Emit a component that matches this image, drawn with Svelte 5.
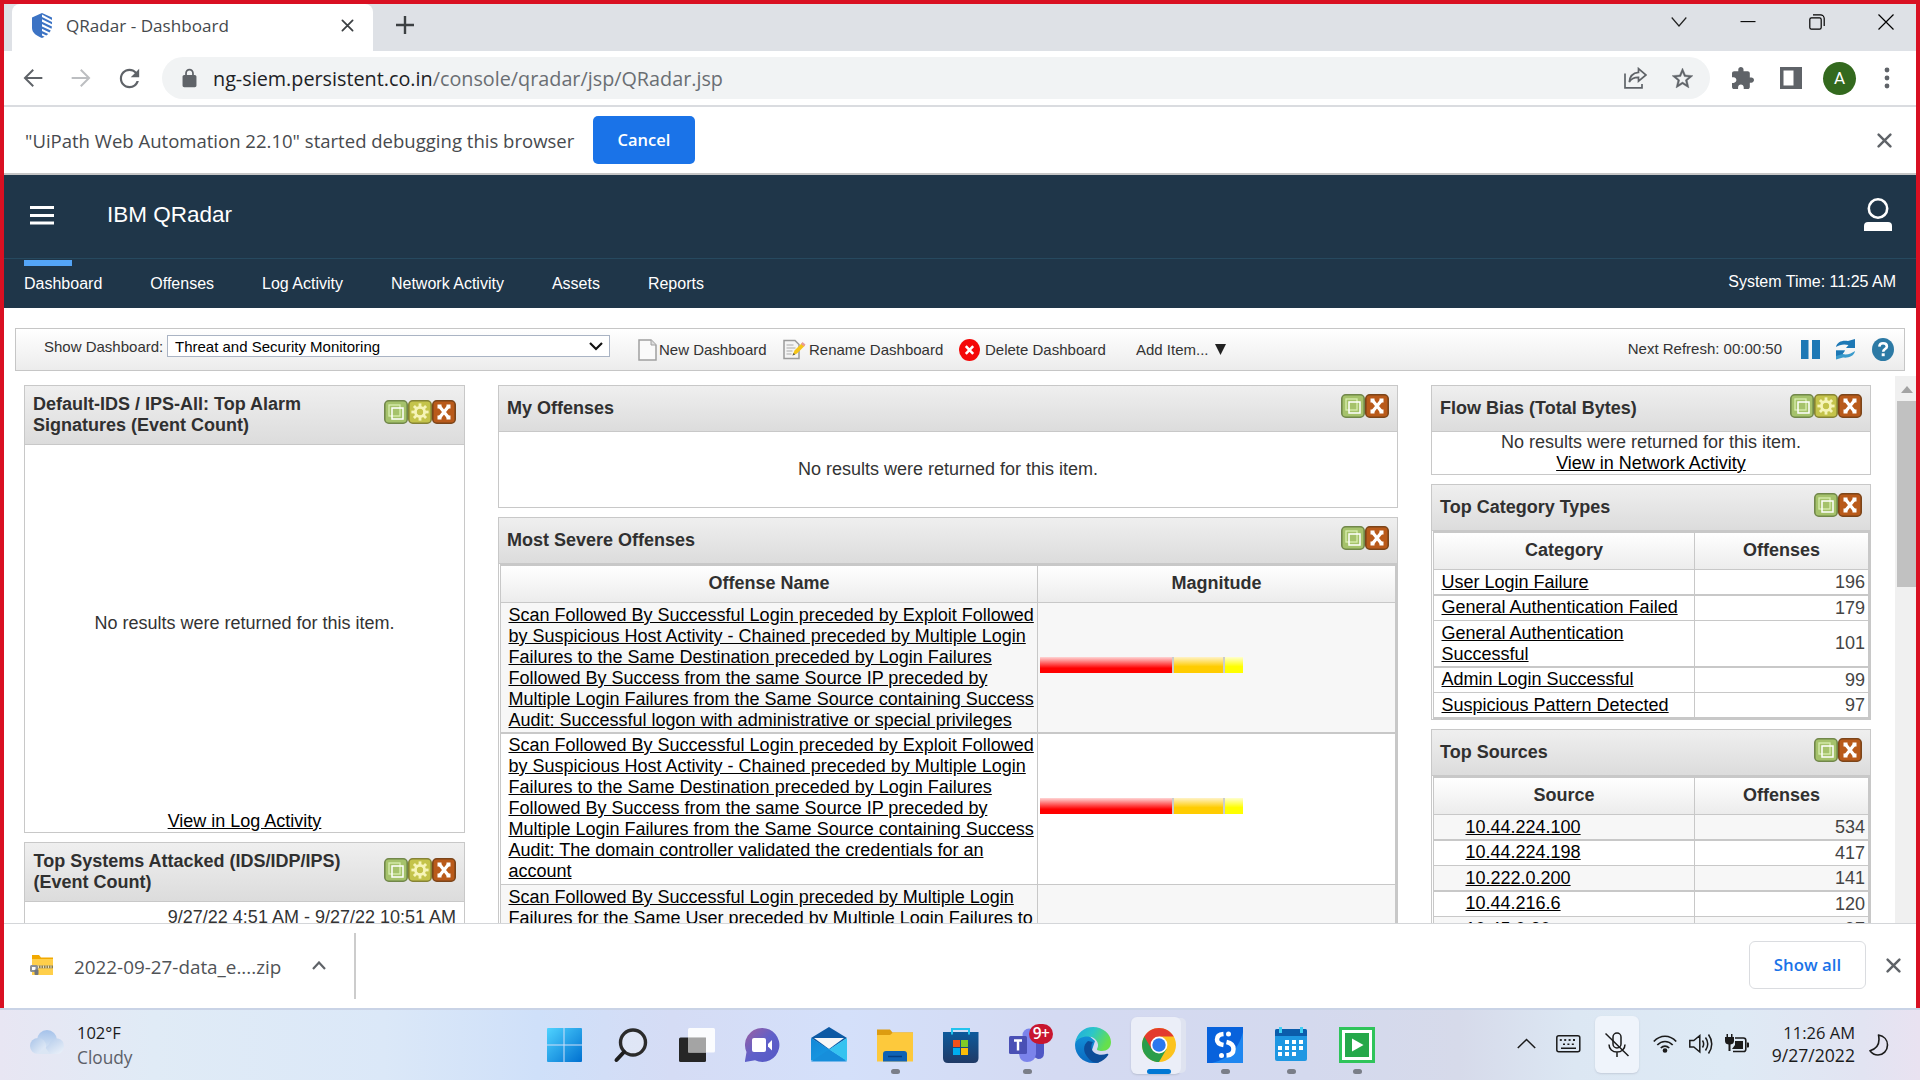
<script>
  const tabs = ['Dashboard', 'Offenses', 'Log Activity', 'Network Activity', 'Assets', 'Reports'];
  const offenses = [
    {
      name: 'Scan Followed By Successful Login preceded by Exploit Followed by Suspicious Host Activity - Chained preceded by Multiple Login Failures to the Same Destination preceded by Login Failures Followed By Success from the same Source IP preceded by Multiple Login Failures from the Same Source containing Success Audit: Successful logon with administrative or special privileges',
      bar: true, kind: 'first'
    },
    {
      name: 'Scan Followed By Successful Login preceded by Exploit Followed by Suspicious Host Activity - Chained preceded by Multiple Login Failures to the Same Destination preceded by Login Failures Followed By Success from the same Source IP preceded by Multiple Login Failures from the Same Source containing Success Audit: The domain controller validated the credentials for an account',
      bar: true, kind: 'second'
    },
    {
      name: 'Scan Followed By Successful Login preceded by Multiple Login Failures for the Same User preceded by Multiple Login Failures to',
      bar: false, kind: 'third'
    }
  ];
  const categories = [
    { name: 'User Login Failure', n: 196, thick: true },
    { name: 'General Authentication Failed', n: 179, thick: false },
    { name: 'General Authentication Successful', n: 101, thick: true, tall: true },
    { name: 'Admin Login Successful', n: 99, thick: false },
    { name: 'Suspicious Pattern Detected', n: 97, last: true }
  ];
  const sources = [
    { name: '10.44.224.100', n: 534, thick: true, grey: true },
    { name: '10.44.224.198', n: 417, thick: false },
    { name: '10.222.0.200', n: 141, thick: true, grey: true },
    { name: '10.44.216.6', n: 120, thick: false },
    { name: '10.45.0.20', n: 97, thick: true, grey: true }
  ];
  const teeth = [0, 45, 90, 135, 180, 225, 270, 315];
  const keys = [3.8, 8.2, 12.6, 17];
</script>

{#snippet cross(size, stroke, color)}
  <svg width={size} height={size} viewBox="0 0 14 14"><path d="M1.5 1.5 12.5 12.5M12.5 1.5 1.5 12.5" stroke={color} stroke-width={stroke} stroke-linecap="round" /></svg>
{/snippet}

{#snippet tools(gear)}
  <div class="tools">
    <svg width="24" height="24" viewBox="0 0 24 24">
      <rect x=".8" y=".8" width="22.4" height="22.4" rx="4" fill="#a5c26b" stroke="#71874a" stroke-width="1.6" />
      <rect x="5" y="5" width="11" height="11" fill="none" stroke="#d9efb0" stroke-width="1.3" />
      <rect x="8" y="8" width="11" height="11" fill="none" stroke="#fff" stroke-width="1.5" />
    </svg>
    {#if gear}
      <svg width="24" height="24" viewBox="0 0 24 24">
        <rect x=".8" y=".8" width="22.4" height="22.4" rx="4" fill="#c4c34a" stroke="#858335" stroke-width="1.6" />
        {#each teeth as a}
          <rect x="10.6" y="3.4" width="2.8" height="5" fill="#f6f4b8" transform="rotate({a} 12 12)" />
        {/each}
        <circle cx="12" cy="12" r="4.6" fill="none" stroke="#f6f4b8" stroke-width="2.8" />
      </svg>
    {/if}
    <svg width="24" height="24" viewBox="0 0 24 24">
      <rect x=".8" y=".8" width="22.4" height="22.4" rx="4" fill="#b95a1a" stroke="#7c4519" stroke-width="1.6" />
      <path d="M8 7 16 17M16 7 8 17" stroke="#fff" stroke-width="3.2" />
      <path d="M5.500 6.500h4M14.500 6.500h4M5.500 17.500h4M14.500 17.500h4" stroke="#fff" stroke-width="4" />
    </svg>
  </div>
{/snippet}

<div class="screen">
  <div class="window">
    <div class="strip">
      <div class="tab">
        <svg class="fav" width="20" height="25" viewBox="0 0 20 25">
          <path d="M10 0 0 4.5V15c0 5 5 8 10 10z" fill="#3c73c4" />
          <path d="M10 0 20 4.5V7L10 1.5zM10 4l10 5v2.3L10 6.3zM10 8.7l10 4.8-.5 2.3L10 11zM10 13.4l8.8 4.2-1.3 2L10 15.8zM10 18l6.3 3-2 1.6L10 20.4zM10 22.6l2.6 1.2L10 25z" fill="#3c73c4" />
        </svg>
        <span class="tabtitle">QRadar - Dashboard</span>
        {@render cross(13, 1.9, '#3c4043')}
      </div>
      <svg class="plus" width="18" height="18" viewBox="0 0 18 18"><path d="M9 0v18M0 9h18" stroke="#3c4043" stroke-width="2.4" /></svg>
      <div class="winctl">
        <svg width="16" height="16" viewBox="0 0 16 16" fill="none" stroke="#222" stroke-width="1.2"><path d="M.7 3.5 8 12l7.3-8.5" /></svg>
        <svg width="16" height="16" viewBox="0 0 16 16" stroke="#000" stroke-width="1.1"><path d="M.5 7.6h15" /></svg>
        <svg width="16" height="16" viewBox="0 0 16 16" fill="none" stroke="#000" stroke-width="1.2"><rect x=".8" y="3.8" width="11.4" height="11.4" rx="1.6" /><path d="M4 .8h7.5a3.7 3.7 0 0 1 3.7 3.7V12" /></svg>
        <svg width="16" height="16" viewBox="0 0 16 16" stroke="#000" stroke-width="1.2"><path d="M.5.5l15 15M15.500.5l-15 15" /></svg>
      </div>
    </div>

    <div class="nav">
      <div class="cell"><svg width="28" height="28" viewBox="0 0 24 24" fill="#5f6368"><path d="M20 11.200H7.200l5.600-5.600L11.600 4.300 3.900 12l7.700 7.700 1.200-1.300-5.600-5.600H20z" /></svg></div>
      <div class="cell"><svg width="28" height="28" viewBox="0 0 24 24" fill="#bcbec1"><path d="M4 11.200h12.800l-5.600-5.600 1.200-1.300 7.700 7.700-7.700 7.700-1.200-1.300 5.600-5.600H4z" /></svg></div>
      <div class="cell"><svg width="29" height="29" viewBox="0 0 24 24" fill="#5f6368"><path d="M17.650 6.350C16.200 4.900 14.210 4 12 4c-4.420 0-7.990 3.580-7.990 8s3.570 8 7.990 8c3.730 0 6.840-2.550 7.730-6h-1.900c-.82 2.500-3.100 4.200-5.830 4.200-3.450 0-6.200-2.750-6.200-6.200S8.550 5.800 12 5.800c1.700 0 3.300.7 4.400 1.800L13 11h7V4z" /></svg></div>
      <div class="omni">
        <svg width="17" height="20" viewBox="3 0 18 23" fill="#5f6368"><path d="M18 8h-1V6c0-2.760-2.240-5-5-5S7 3.240 7 6v2H6c-1.100 0-2 .9-2 2v10c0 1.100.9 2 2 2h12c1.100 0 2-.9 2-2V10c0-1.100-.9-2-2-2zM9 6c0-1.660 1.340-3 3-3s3 1.340 3 3v2H9V6z" /></svg>
        <span class="url">ng-siem.persistent.co.in<i>/console/qradar/jsp/QRadar.jsp</i></span>
        <svg width="23" height="22" viewBox="0 0 23 22" fill="none" stroke="#5f6368" stroke-width="1.700"><path d="M1 6.500V20.800h17V17" /><path d="M14.500 1.600 22 8l-7.500 6.200v-3.800C10 10.300 7.300 11.600 5.300 15 5.700 9.500 9 6 14.500 5.400z" /></svg>
        <svg width="25" height="25" viewBox="0 0 24 24" fill="#5f6368" stroke="#5f6368" stroke-width=".4"><path d="M22 9.240l-7.190-.62L12 2 9.190 8.630 2 9.240l5.460 4.730L5.820 21 12 17.270 18.180 21l-1.630-7.030L22 9.240zM12 15.400l-3.760 2.270 1-4.280-3.320-2.880 4.380-.38L12 6.100l1.710 4.040 4.380.38-3.320 2.880 1 4.280L12 15.400z" /></svg>
      </div>
      <svg class="puzzle" width="22" height="22" viewBox="2 1 21 21" fill="#5f6368"><path d="M20.500 11H19V7c0-1.100-.9-2-2-2h-4V3.500C13 2.120 11.880 1 10.500 1S8 2.120 8 3.500V5H4c-1.100 0-1.990.9-1.990 2v3.800H3.500c1.490 0 2.700 1.210 2.700 2.700s-1.210 2.700-2.700 2.700H2V20c0 1.100.9 2 2 2h3.800v-1.500c0-1.490 1.210-2.700 2.700-2.700 1.490 0 2.700 1.210 2.700 2.700V22H17c1.100 0 2-.9 2-2v-4h1.500c1.380 0 2.500-1.120 2.500-2.500S21.880 11 20.500 11z" /></svg>
      <svg class="side" width="22" height="22" viewBox="0 0 22 22"><path d="M0 0h22v22H0zM3.500 3.500v15h10v-15z" fill="#5f6368" fill-rule="evenodd" /></svg>
      <div class="avatar">A</div>
      <svg class="more" width="6" height="22" viewBox="0 0 6 22" fill="#5f6368"><circle cx="3" cy="3" r="2.400" /><circle cx="3" cy="11" r="2.400" /><circle cx="3" cy="19" r="2.400" /></svg>
    </div>

    <div class="info">
      <span>"UiPath Web Automation 22.10" started debugging this browser</span>
      <button class="cancel">Cancel</button>
      <div class="infox">{@render cross(15, 2.3, '#5f6368')}</div>
    </div>

    <header>
      <div class="brand">
        <svg width="24" height="19" viewBox="0 0 24 19" fill="#fff"><path d="M0 0h24v3H0zM0 8h24v3H0zM0 15.600h24v3H0z" /></svg>
        <h1>IBM QRadar</h1>
        <svg class="user" width="28" height="33" viewBox="0 0 28 33"><circle cx="14" cy="10.500" r="9.200" fill="none" stroke="#fff" stroke-width="2.600" /><path d="M0 33v-5q0-4 4-4h20q4 0 4 4v5z" fill="#fff" /></svg>
      </div>
      <nav>
        {#each tabs as t, i}
          <span class:active={i === 0}>{t}</span>
        {/each}
        <span class="time">System Time: 11:25 AM</span>
      </nav>
    </header>

    <main>
      <div class="bar">
        <span class="lbl">Show Dashboard:</span>
        <div class="select">Threat and Security Monitoring
          <svg width="14" height="9" viewBox="0 0 14 9"><path d="M1 1l6 6 6-6" fill="none" stroke="#111" stroke-width="2.200" /></svg>
        </div>
        <div class="act new">
          <svg width="19" height="22" viewBox="0 0 19 22"><path d="M1 1h12l5 5v15H1z" fill="#fafafa" stroke="#a0a0a0" stroke-width="1.500" /><path d="M13 1v5h5" fill="#ddd" stroke="#a0a0a0" /></svg>
          New Dashboard
        </div>
        <div class="act ren">
          <svg width="23" height="21" viewBox="0 0 23 21"><path d="M1 1.500h11l4 4V19.500H1z" fill="#f4f4f4" stroke="#9a9a9a" stroke-width="1.500" /><path d="M3.500 6h7M3.500 9h9M3.500 12h6M3.500 15h5" stroke="#aaa" /><path d="M9.500 16.500l2-5L19 4l3 2.500-8 8z" fill="#f5c518" /><path d="M18 5l1.500-2 3 2.500L21 7.500z" fill="#e89a9a" /><path d="M9.500 16.500l1-2.600 1.800 1.500z" fill="#555" /></svg>
          Rename Dashboard
        </div>
        <div class="act del">
          <svg width="21" height="22" viewBox="0 0 21 22"><ellipse cx="10.500" cy="11" rx="10.500" ry="11" fill="#f40808" /><path d="M6.800 7.200l7.400 7.600M14.200 7.200l-7.400 7.600" stroke="#fff" stroke-width="2.600" /></svg>
          Delete Dashboard
        </div>
        <div class="act add">Add Item...<svg width="11" height="11" viewBox="0 0 11 11"><path d="M0 0h11L5.500 11z" fill="#222" /></svg></div>
        <span class="next">Next Refresh: 00:00:50</span>
        <svg width="19" height="19" viewBox="0 0 19 19" fill="#1d78b5"><path d="M0 0h7.500v19H0zM11 0h8v19h-8z" /></svg>
        <svg class="sync" width="21" height="21" viewBox="0 0 21 21"><path d="M1 8C2 2.500 8 .8 13 2l7-2v9h-9l2.500-3C9 4.800 4.500 5.500 1 8z" fill="#1d78b5" /><path d="M20 12c-1 5.500-7 7.200-12 6.500L1 20.500V11.500h9L7.500 15c4.500 1.200 9-.5 12.500-3z" fill="#3a9bcc" /><path d="M1 11.500h9L7.500 15 1 17z" fill="#1d78b5" /></svg>
        <svg class="help" width="22" height="23" viewBox="0 0 22 23"><ellipse cx="11" cy="11.500" rx="11" ry="11.500" fill="#2d7aa5" /><path d="M7.300 8.600C7.600 6.200 9 5.300 11 5.300c2.300 0 3.900 1.200 3.900 3.100 0 2.600-3.700 2.700-3.700 5.300" fill="none" stroke="#fff" stroke-width="2.600" /><rect x="9.700" y="15.300" width="3" height="2.900" fill="#fff" /></svg>
      </div>

      <div class="board">
        <div class="col left">
          <section class="tall">
            <div class="head"><h2>Default-IDS / IPS-All: Top Alarm Signatures (Event Count)</h2>{@render tools(true)}</div>
            <p class="none">No results were returned for this item.</p>
            <a href="#log">View in Log Activity</a>
          </section>
          <section class="systems">
            <div class="head"><h2>Top Systems Attacked (IDS/IDP/IPS) (Event Count)</h2>{@render tools(true)}</div>
            <p class="range">9/27/22 4:51 AM - 9/27/22 10:51 AM</p>
          </section>
        </div>

        <div class="col mid">
          <section class="mine">
            <div class="head"><h2>My Offenses</h2>{@render tools(false)}</div>
            <p>No results were returned for this item.</p>
          </section>
          <section>
            <div class="head"><h2>Most Severe Offenses</h2>{@render tools(false)}</div>
            <div class="table wide">
              <div class="row th"><b>Offense Name</b><b>Magnitude</b></div>
              {#each offenses as o}
                <div class="row {o.kind}">
                  <div class="c1"><a href="#offense">{o.name}</a></div>
                  <div class="c2">{#if o.bar}<div class="mag"><i class="r"></i><i class="o"></i><i class="y"></i></div>{/if}</div>
                </div>
              {/each}
            </div>
          </section>
        </div>

        <div class="col right">
          <section class="flow">
            <div class="head"><h2>Flow Bias (Total Bytes)</h2>{@render tools(true)}</div>
            <p>No results were returned for this item.</p>
            <a href="#net">View in Network Activity</a>
          </section>
          <section>
            <div class="head"><h2>Top Category Types</h2>{@render tools(false)}</div>
            <div class="table">
              <div class="row th"><b>Category</b><b>Offenses</b></div>
              {#each categories as c}
                <div class="row" class:thick={c.thick} class:tallrow={c.tall} class:last={c.last}>
                  <div class="c1"><a href="#cat">{c.name}</a></div>
                  <div class="c2">{c.n}</div>
                </div>
              {/each}
            </div>
          </section>
          <section>
            <div class="head"><h2>Top Sources</h2>{@render tools(false)}</div>
            <div class="table src">
              <div class="row th"><b>Source</b><b>Offenses</b></div>
              {#each sources as s}
                <div class="row" class:thick={s.thick} class:grey={s.grey}>
                  <div class="c1"><a href="#src">{s.name}</a></div>
                  <div class="c2">{s.n}</div>
                </div>
              {/each}
            </div>
          </section>
        </div>

        <div class="scroll">
          <svg width="12" height="7" viewBox="0 0 12 7"><path d="M6 0l6 7H0z" fill="#a3a3a3" /></svg>
          <div class="thumb"></div>
        </div>
      </div>
    </main>

    <div class="downloads">
      <svg class="zip" width="24" height="21" viewBox="0 0 24 21"><path d="M2 0h7l2 2.500h12V20H2z" fill="#f2a900" /><path d="M2 4h21v16H2z" fill="#ffcf4a" /><path d="M8 10.500h15v2.800H8z" fill="#8d7d4a" /><path d="M8 11.900h15" stroke="#e6dfc0" stroke-dasharray="1 1.500" stroke-width="2.800" /><rect x="0" y="10" width="8" height="7" rx="1.500" fill="#8a8f94" /><rect x="2" y="12" width="3.500" height="3" fill="#fff" /><rect x="4.500" y="14.500" width="4" height="5.500" rx="1" fill="#70757a" /></svg>
      <span class="file">2022-09-27-data_e....zip</span>
      <svg class="up" width="14" height="9" viewBox="0 0 14 9"><path d="M1 8l6-6.500L13 8" fill="none" stroke="#5f6368" stroke-width="2.200" /></svg>
      <div class="vline"></div>
      <button class="showall">Show all</button>
      <div class="dlx">{@render cross(15, 2.3, '#5f6368')}</div>
    </div>
  </div>

  <footer>
    <svg class="cloud" width="36" height="24" viewBox="0 0 36 24">
      <defs>
        <linearGradient id="cl" x1="0" y1="0" x2="0" y2="1"><stop offset="0" stop-color="#a5c2ea" /><stop offset="1" stop-color="#dbe7f5" /></linearGradient>
        <linearGradient id="cf" x1="0" y1="0" x2="1" y2="1"><stop offset="0" stop-color="#a9c4e8" /><stop offset="1" stop-color="#eef3fa" /></linearGradient>
      </defs>
      <circle cx="17" cy="10" r="10" fill="url(#cl)" /><path d="M8 24h20a8 8 0 0 0 0-15.500c-5-.5-8 3-9 6z" fill="url(#cf)" /><circle cx="8" cy="16" r="8" fill="url(#cf)" /><path d="M8 24h12l-5-7z" fill="#dbe6f4" />
    </svg>
    <div class="weather"><span>102°F</span><span>Cloudy</span></div>

    <div class="apps">
      <div class="app">
        <svg width="36" height="36" viewBox="0 0 36 36"><defs><linearGradient id="wn" x1="0" y1="0" x2="1" y2="1"><stop offset="0" stop-color="#4fd3ff" /><stop offset="1" stop-color="#0070d0" /></linearGradient></defs><path d="M0 2q0-1 1-1H16.500v16.500H0zM17.500 1H34q1 0 1 1v15.500H17.500zM0 18.500H16.500v16.500H1q-1 0-1-1zM17.500 18.500H35v15.500q0 1-1 1H17.500z" fill="url(#wn)" /></svg>
      </div>
      <div class="app">
        <svg width="36" height="36" viewBox="0 0 36 36"><circle cx="20" cy="15.500" r="12.500" fill="#e8ecf6" fill-opacity=".6" stroke="#2b2b2b" stroke-width="3.400" /><path d="M11 25 3.500 33" stroke="#1e1e1e" stroke-width="4" stroke-linecap="round" /></svg>
      </div>
      <div class="app">
        <svg width="36" height="36" viewBox="0 0 36 36"><rect x="0" y="10.500" width="27" height="24.500" rx="1.500" fill="#262626" /><rect x="9" y="1" width="27" height="24.500" rx="1.500" fill="#fff" fill-opacity=".9" /><path d="M9 10.500h18v15H9z" fill="#a4a4a4" /></svg>
      </div>
      <div class="app">
        <svg width="36" height="36" viewBox="0 0 36 36"><defs><linearGradient id="ct" x1="0" y1="0" x2="1" y2="1"><stop offset="0" stop-color="#a05f9f" /><stop offset=".5" stop-color="#5f60c9" /><stop offset="1" stop-color="#5558c5" /></linearGradient></defs><path d="M17 1a17 17 0 1 1-7 32.300L-.2 35 1.500 25A17 17 0 0 1 17 1z" fill="url(#ct)" /><rect x="7" y="11" width="14" height="14" rx="2" fill="#fff" /><path d="M23 17l4-4v10.500l-4-4z" fill="#fff" /></svg>
      </div>
      <div class="app">
        <svg width="36" height="36" viewBox="0 0 36 36"><defs><linearGradient id="ml" x1="0" y1="0" x2="1" y2="1"><stop offset="0" stop-color="#1187d6" /><stop offset="1" stop-color="#1ca0e8" /></linearGradient></defs><path d="M0 11 18 0l18 11-18 12z" fill="#0c59a4" /><path d="M3 11h30L18 22z" fill="#f7f7f7" /><path d="M0 11l36 22.500H0z" fill="url(#ml)" /><path d="M36 11v23L18 22.500z" fill="#35c3f0" /><path d="M0 34.500h36L18 22.500z" fill="#168edb" /></svg>
      </div>
      <div class="app">
        <svg width="36" height="36" viewBox="0 0 36 36"><path d="M0 2.500h13l2.500 3H36v5H0z" fill="#dd9c10" /><path d="M0 8h13l3-2.500h20V34.500H0z" fill="#fdc93c" /><path d="M6 34.500V27q0-3 3-3h18q3 0 3 3v7.500z" fill="#0f62b5" /><path d="M11 29.500h14" stroke="#063e80" stroke-width="1.500" /></svg>
        <i></i>
      </div>
      <div class="app">
        <svg width="36" height="36" viewBox="0 0 36 36"><defs><linearGradient id="st" x1="0" y1="0" x2="0" y2="1"><stop offset="0" stop-color="#0d5a9c" /><stop offset="1" stop-color="#203a66" /></linearGradient></defs><path d="M0 5H35.500v26q0 5-5 5H5q-5 0-5-5z" fill="url(#st)" /><path d="M9 7.500V2h17v5.500" fill="none" stroke="#22c3ee" stroke-width="2" /><path d="M10 13h7v7h-7z" fill="#f1511b" /><path d="M18 13h7v7h-7z" fill="#80cc28" /><path d="M10 21h7v7h-7z" fill="#00adef" /><path d="M18 21h7v7h-7z" fill="#fbbc09" /></svg>
      </div>
      <div class="app">
        <svg class="over" width="46" height="36" viewBox="0 0 46 36"><path d="M25 14h10v12q0 6-6 6l-4-2z" fill="#4f57c5" /><circle cx="20" cy="8" r="6.500" fill="#7b83eb" /><path d="M10 13h17v14q-1 8-9 8-7 0-8-8z" fill="#7b83eb" /><rect x="0" y="9" width="18" height="18" rx="1.500" fill="#4a50b5" /><path d="M5 13.500h8M9 13.500v10" stroke="#fff" stroke-width="2.400" /></svg>
        <span class="badge">9+</span>
        <i></i>
      </div>
      <div class="app">
        <svg width="36" height="36" viewBox="0 0 36 36"><defs><linearGradient id="e1" x1="0" y1="0" x2="1" y2=".4"><stop offset="0" stop-color="#1fa8e0" /><stop offset=".5" stop-color="#2cc6c9" /><stop offset="1" stop-color="#66e04c" /></linearGradient><linearGradient id="e2" x1="0" y1="0" x2="0" y2="1"><stop offset="0" stop-color="#1391d8" /><stop offset="1" stop-color="#0a69c0" /></linearGradient></defs>
          <path d="M0 18C0 12 6 8 13 8l7 6-4 12 8 9.500C22 36 20 36 18 36 8 36 0 28 0 18z" fill="url(#e2)" />
          <path d="M13 14c-4.500 3.500-5 9-2 14 3.500 6 8.500 8.500 12.500 7.500 4-1.300 7.500-4 9.700-7.500.5-1-.3-1.600-1.200-1.200-7 2.500-14.500.2-15.500-5.800-.4-2.500.3-4.500 1.500-6z" fill="#0c4d99" />
          <path d="M0 16C2 6 9 0 18 0c10 0 18 7 18 15 0 6-4 9-9 9-3.500 0-5.500-1-5-2 .6-1.300 1.200-2.300 1-4.500C22.500 13 18 9.500 12.500 9.500 7 9.500 2 12 0 16z" fill="url(#e1)" /></svg>
      </div>
      <div class="app chrome">
        <svg width="34" height="34" viewBox="0 0 34 34"><circle cx="17" cy="17" r="17" fill="#fcc31e" /><path d="M17 17 2.300 8.500A17 17 0 0 0 17 34l7.400-12.800z" fill="#2a9d4b" /><path d="M2.300 8.500A17 17 0 0 1 31.700 8.500H17v8.500L9.700 21.200z" fill="#e33b2e" /><circle cx="17" cy="17" r="8.400" fill="#fff" /><circle cx="17" cy="17" r="6.700" fill="#2b78ee" /></svg>
        <i class="on"></i>
      </div>
      <div class="app">
        <svg width="36" height="36" viewBox="0 0 36 36"><path d="M0 0h36v36H0z" fill="#0862dc" /><path d="M36 5v31H5Q30 30 36 5z" fill="#1e86f0" /><path d="M16.500 7q-6.500.5-6.500 5.500 0 4.500 6.500 5.500" fill="none" stroke="#fff" stroke-width="4.500" /><path d="M19.500 15q7 1.500 7 7 0 6-7 6.500" fill="none" stroke="#fff" stroke-width="4.500" /><circle cx="21.500" cy="7" r="2.500" fill="#fff" /><circle cx="14.500" cy="28.500" r="2.500" fill="#fff" /></svg>
        <i></i>
      </div>
      <div class="app">
        <svg width="36" height="36" viewBox="0 0 36 36"><path d="M2 4q0-2 2-2h28q2 0 2 2v28q0 2-2 2H4q-2 0-2-2z" fill="#1f97e2" /><path d="M2 9V4q0-2 2-2h28q2 0 2 2v5z" fill="#0b5cab" /><path d="M7.500 0v6M28.500 0v6" stroke="#3fd0f5" stroke-width="3" /><path d="M12 15h4M19 15h4M26 15h4M5 21h4M12 21h4M19 21h4M26 21h4M5 27h4M12 27h4M19 27h4" stroke="#fff" stroke-width="4" /></svg>
        <i></i>
      </div>
      <div class="app">
        <svg width="36" height="36" viewBox="0 0 36 36"><path d="M0 0h36v36H0z" fill="#2fc45a" /><rect x="4.500" y="4.500" width="27" height="27" fill="#25a84a" stroke="#fff" stroke-width="3" /><path d="M13 11.500v13L24.500 18z" fill="#fff" /></svg>
        <i></i>
      </div>
    </div>

    <div class="tray">
      <svg class="t1" width="19" height="11" viewBox="0 0 19 11"><path d="M.8 10l8.700-8.500L18.200 10" fill="none" stroke="#1b1b1b" stroke-width="1.500" /></svg>
      <svg class="t2" width="25" height="18" viewBox="0 0 25 18"><rect x=".8" y=".8" width="23" height="16" rx="2" fill="none" stroke="#1b1b1b" stroke-width="1.500" />
        {#each keys as k}<path d="M{k} 5h2" stroke="#1b1b1b" stroke-width="1.800" />{/each}
        <path d="M7 9.200h2M11.400 9.200h2M15.800 9.200h2M5 13.200h15" stroke="#1b1b1b" stroke-width="1.500" /></svg>
      <div class="mic"><svg width="24" height="26" viewBox="0 0 24 26" fill="none" stroke="#1b1b1b" stroke-width="1.500"><rect x="8" y="1" width="8" height="15" rx="4" /><path d="M4 12.500c0 4.500 3.500 7.500 8 7.500s8-3 8-7.500M12 20v5M.5 1.500l23 22.500" /></svg></div>
      <svg class="t4" width="24" height="18" viewBox="0 0 24 18" fill="none" stroke="#1b1b1b" stroke-width="1.700"><path d="M.8 6.500c6.500-7 15.900-7 22.400 0M4.300 10c4.500-4.700 10.900-4.700 15.400 0M7.800 13c2.500-2.500 5.900-2.500 8.400 0" /><circle cx="12" cy="15.500" r="1.500" fill="#1b1b1b" /></svg>
      <svg class="t5" width="24" height="22" viewBox="0 0 24 22" fill="none" stroke="#1b1b1b" stroke-width="1.500"><path d="M.8 7.500v6.500h4l6 5V2.500l-6 5zM13.500 7.500q2.300 3.500 0 7M16.500 4.500q4.500 6.300 0 13M19.500 1.500q6.500 9.300 0 19" /></svg>
      <svg class="t6" width="24" height="20" viewBox="0 0 24 20"><path d="M10 4h8.500q2.300 0 2.300 2.300v8.900q0 2.300-2.300 2.300H8" fill="none" stroke="#1b1b1b" stroke-width="1.600" /><path d="M10 7h8v8H7l3-4z" fill="#1b1b1b" /><path d="M22 8.500h1.200q.8 0 .8 1v3q0 1-.8 1H22zM1.500 0H3v3h3V0h1.500v3H9v4q0 3-3.500 3.500V17h-2v-6.500Q0 10 0 7V3h1.500z" fill="#1b1b1b" /></svg>
      <div class="clock"><span>11:26 AM</span><span>9/27/2022</span></div>
      <svg class="t7" width="20" height="22" viewBox="0 0 20 22"><path d="M9.500 1c5.500 1 9 5 9 10 0 5.700-4.300 10-9.500 10-3.300 0-6-1.500-8-4.300C7 15 11.500 10.500 9.500 1z" fill="none" stroke="#1b1b1b" stroke-width="1.600" stroke-linejoin="round" /></svg>
    </div>
  </footer>
</div>

<style>
  :global(body) { background: #fff; }
  .screen { width: 1920px; height: 1080px; overflow: hidden; display: flex; flex-direction: column; font-family: "Liberation Sans", Arial, sans-serif; color: #333; }
  .screen * { box-sizing: border-box; }
  svg { display: block; flex: none; }
  h1, h2, p { margin: 0; font-weight: normal; }
  a { color: #000; text-decoration: underline; }
  .window { height: 1008px; flex: none; border: 4px solid #d91022; border-bottom: 0; display: flex; flex-direction: column; background: #fff; }
  .window > * { flex: none; }

  .strip { height: 47px; background: #dee1e6; display: flex; }
  .tab { width: 361px; margin-left: 8px; background: #fff; border-radius: 8px 8px 0 0; display: flex; align-items: center; padding: 0 19px 4px 20px; }
  .tabtitle { flex: 1; margin-left: 14px; font: 17.1px/24px "Open Sans", sans-serif; color: #45494d; white-space: nowrap; }
  .plus { margin: 12px 0 0 23px; }
  .winctl { margin: 10px 22.500px 0 auto; display: flex; gap: 53px; }

  .nav { height: 56px; padding: 3px 0 3px 5px; display: flex; align-items: center; border-bottom: 2px solid #dadce0; }
  .cell { width: 48px; display: flex; justify-content: center; }
  .omni { width: 1548px; height: 42px; margin: -1px 0 0 9px; border-radius: 21px; background: #f1f3f4; display: flex; align-items: center; padding: 0 15px 0 19px; }
  .url { flex: 1; margin: 2px 0 0 15px; font: 19.8px/30px "Open Sans", sans-serif; color: #202124; white-space: nowrap; }
  .url i { font-style: normal; color: #6a6e73; }
  .omni svg { margin-top: 1px; }
  .omni svg:last-child { margin-left: 23px; }
  .puzzle { margin-left: 22px; }
  .side { margin-left: 26px; }
  .avatar { width: 33px; height: 33px; margin-left: 21px; border-radius: 50%; background: #33691e; color: #fff; font: 17px/33px Roboto, sans-serif; text-align: center; }
  .more { margin-left: 28px; }

  .info { height: 68px; border-bottom: 2px solid #c6c6c6; display: flex; align-items: center; padding-left: 21px; font: 18.550px/28px "Open Sans", sans-serif; color: #474a4e; white-space: nowrap; }
  .info span { width: 550px; padding-top: 1px; }
  .cancel { width: 102px; height: 48px; margin-left: 18px; border: 0; border-radius: 5px; background: #1a73e8; color: #fff; font: 600 16.500px/24px "Open Sans", sans-serif; padding: 0; }
  .infox { margin: 0 24px 0 auto; }

  header { height: 133px; background: #1f3649; color: #fff; }
  .brand { height: 84px; border-bottom: 1px solid #26495f; display: flex; align-items: center; padding: 0 24px 2px 26px; }
  .brand h1 { font-size: 22.500px; margin: -2px 0 0 53px; line-height: 26px; }
  .user { margin: -2px 0 0 auto; }
  nav { height: 49px; display: flex; gap: 48px; padding-left: 20px; font-size: 16px; line-height: 18px; }
  nav span { padding-top: 16px; }
  nav span.active { padding-top: 1px; }
  .active::before { content: ""; display: block; width: 48px; height: 6px; margin-bottom: 9px; background: #54a5f7; }
  nav span.time { margin: 0 20px 0 auto; padding-top: 14px; }

  main { height: 615px; overflow: hidden; padding-top: 20px; }
  .bar { height: 43px; width: 1890px; margin-left: 11px; border: 1px solid #c6c6c6; background: linear-gradient(#fff, #ececec); display: flex; align-items: center; font-size: 15px; line-height: 18px; padding-left: 28px; white-space: nowrap; }
  .lbl { width: 119px; margin-top: -5px; }
  .select { width: 443px; height: 22px; margin: -7px 0 0 4px; border: 1px solid #aab4c4; background: #fff; color: #000; display: flex; align-items: center; justify-content: space-between; padding: 1px 6px 0 7px; }
  .act { display: flex; align-items: center; }
  .new { margin-left: 28px; width: 145px; gap: 2px; }
  .ren { width: 176px; gap: 3px; }
  .del { width: 177px; gap: 5px; }
  .add { gap: 6px; }
  .next { margin: -2px 19px 0 auto; }
  .bar > svg { margin-top: -1px; }
  .bar .sync { margin-left: 15px; }
  .bar .help { margin: 0 10px 0 16px; }

  .board { display: flex; align-items: flex-start; font-size: 18px; line-height: 21px; }
  .col { display: flex; flex-direction: column; gap: 9px; padding-top: 14px; flex: none; }
  .left { width: 441px; margin-left: 20px; }
  .mid { width: 900px; margin-left: 33px; }
  .right { width: 440px; margin-left: 33px; }
  section { border: 1px solid #c8c8c8; background: #fff; }
  .head { height: 46px; border-bottom: 1px solid #c8c8c8; background: linear-gradient(#efefef, #dcdcdc); display: flex; justify-content: space-between; align-items: center; padding: 0 8px; text-align: left; }
  .head h2 { font-size: 18px; font-weight: bold; line-height: 21px; color: #303030; margin-top: -1px; }
  .tools { display: flex; margin-top: -5px; }
  .left .head { height: 59px; }
  .left .head h2 { width: 320px; margin-top: 0; }
  .left .tools { margin-top: -6px; }
  .left .systems h2 { margin-left: .5px; }
  .left .systems .tools { margin-top: -5px; }
  .tall { height: 448px; text-align: center; }
  .tall .none { padding-top: 168px; height: 366px; }
  .systems { height: 120px; }
  .range { text-align: right; padding: 5px 8px 0 0; }
  .mine { height: 123px; text-align: center; }
  .mine p { padding-top: 27px; }
  .flow { height: 90px; text-align: center; line-height: 21px; }

  .table { border: 2px solid #c8c8c8; border-left-width: 1px; margin-left: 1px; }
  .row { display: grid; grid-template-columns: 261px 1fr; border-bottom: 1px solid #c8c8c8; height: 25px; }
  .row > * { min-width: 0; }
  .row > :first-child { border-right: 1px solid #c8c8c8; }
  .wide .row { grid-template-columns: 537px 1fr; }
  .row.th { height: 37px; background: linear-gradient(#fff, #ececec); text-align: center; line-height: 35px; color: #303030; }
  .row.thick { height: 26px; border-bottom-width: 2px; }
  .row.tallrow { height: 47px; }
  .row.last { height: 24px; border-bottom: 0; }
  .c1 { padding: 1px 0 0 7.500px; }
  .row:nth-child(even) .c1 { padding-top: 2px; }
  .c2 { display: flex; align-items: center; justify-content: flex-end; padding-right: 3px; color: #444; }
  .wide .c2 { justify-content: flex-start; padding: 0 0 6px 2px; }
  .wide .row.first { height: 131px; border-bottom-width: 2px; background: #f7f7f7; }
  .wide .row.second { height: 151px; }
  .wide .row.third { height: 131px; background: #f7f7f7; }
  .src .c1 { padding-left: 31.500px; }
  .grey { background: #f7f7f7; }
  .mag { display: flex; height: 16px; width: 203px; }
  .mag i { height: 16px; }
  .r { width: 132px; background: linear-gradient(#ffd5d5, #f00 70%); }
  .o { width: 51px; border-left: 2px solid #ccc; background: linear-gradient(#fff3c8, #fc0 60%) padding-box; }
  .y { width: 20px; border-left: 2px solid #ccc; background: linear-gradient(#ffffd0, #ff0 60%) padding-box; }

  .scroll { width: 21px; height: 547px; margin: 5px 0 0 24px; background: #f0f0f0; display: flex; flex-direction: column; align-items: center; padding: 10px 0 0 2px; }
  .thumb { width: 19px; height: 186px; margin-top: 8px; background: #c1c1c1; }

  .downloads { height: 85px; border-top: 1px solid #d4d6d9; background: #fff; display: flex; align-items: center; padding-left: 26px; }
  .zip { margin-top: -2px; }
  .file { width: 209px; margin: 1px 0 0 20px; font: 18.850px/28px "Open Sans", sans-serif; color: #505357; white-space: nowrap; }
  .up { margin-left: 29px; margin-top: -2px; }
  .vline { width: 2px; height: 66px; margin-left: 28px; background: #ccc; }
  .showall { width: 117px; height: 48px; margin: -2px 20px 0 auto; border: 1px solid #dadce0; border-radius: 6px; background: #fff; color: #1a73e8; font: 600 16.800px/24px "Open Sans", sans-serif; padding: 0; }
  .dlx { margin: -2px 15px 0 0; }

  footer { height: 72px; flex: none; display: flex; align-items: flex-start; font-family: "Open Sans", sans-serif; color: #1b1b1b; border-top: 2px solid #c9d3e6;
    background: linear-gradient(90deg, #e8e6f3 0, #e0ebf6 8%, #dbe8f8 20%, #cfe0f9 28%, #d5dcf5 35%, #d4e0fa 44%, #d4daf2 55%, #d4d9ee 68%, #d6daea 76%, #dce7f3 82%, #deeaf5 90%, #e2e4f2 97%, #e9e2f1 100%); }
  .cloud { margin: 20px 0 0 30px; }
  .weather { width: 120px; margin: 11px 0 0 11px; display: flex; flex-direction: column; font-size: 16.500px; line-height: 24px; }
  .weather span:last-child { color: #5c6068; font-size: 17.300px; padding-top: 1px; }
  .apps { display: flex; margin-left: 335px; }
  .app { width: 66px; height: 70px; padding-top: 17px; display: flex; flex-direction: column; align-items: center; position: relative; }
  .app i { width: 9px; height: 5px; margin-top: 6px; border-radius: 3px; background: #7a7e88; }
  .app .over { margin: 0 -5px 0 5px; }
  .badge { position: absolute; left: 35px; top: 14px; width: 24px; height: 20px; border-radius: 10px; background: #c8162f; color: #fff; font-size: 15.500px; font-weight: 600; line-height: 19px; text-align: center; letter-spacing: -.5px; }
  .chrome { width: 50px; height: 57px; margin: 7px 11px 0 5px; padding: 11px 0 0 5px; border-radius: 6px; background: #ebeef8; box-shadow: 6px 0 0 -1px #dfe3f0, 0 1px 2px #b8bfd2; }
  .app .on { width: 24px; background: #0078d4; margin-top: 7px; }
  .tray { display: flex; flex: 1; }
  .t1 { margin: 28px 0 0 127px; }
  .t2 { margin: 25px 0 0 20px; }
  .mic { width: 44px; height: 57px; margin: 6px 0 0 14px; border-radius: 6px; background: #eff4fb; box-shadow: 0 1px 2px #c3ccda; display: flex; align-items: center; justify-content: center; }
  .t4 { margin: 25px 0 0 14px; }
  .t5 { margin: 23px 0 0 12px; }
  .t6 { margin: 24px 0 0 12px; }
  .clock { width: 100px; margin: 11px 0 0 6px; display: flex; flex-direction: column; align-items: flex-end; font-size: 16.500px; line-height: 23px; }
  .clock span:last-child { font-size: 17.600px; }
  .t7 { margin: 24px 0 0 14px; }
</style>
